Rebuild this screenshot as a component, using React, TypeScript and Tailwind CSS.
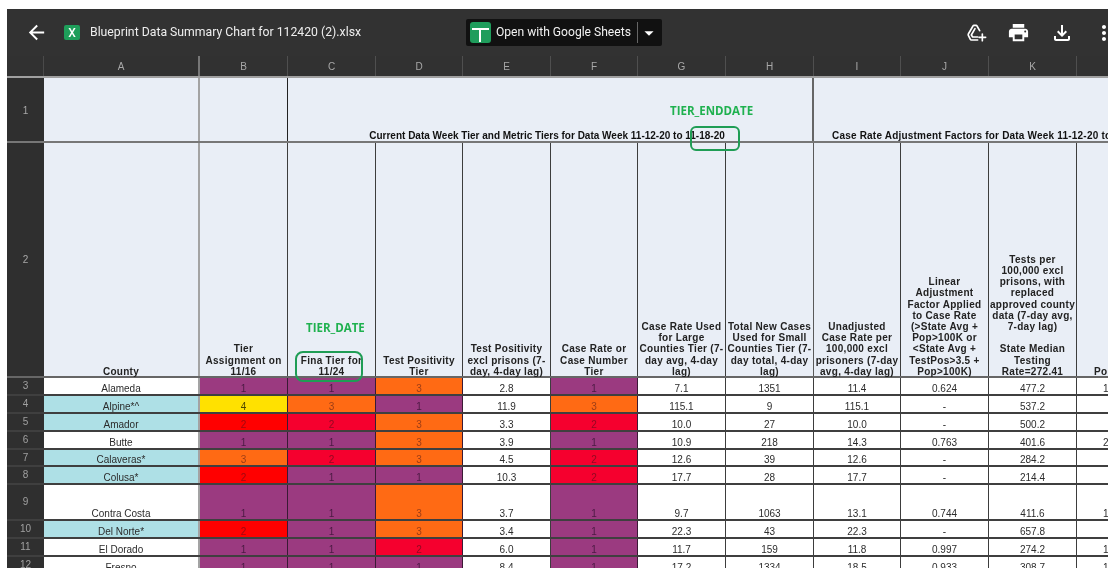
import React from "react";
import { MdArrowBack, MdPrint, MdOutlineFileDownload, MdMoreVert, MdArrowDropDown } from "react-icons/md";

const P = "bg-[#9b3a80]";
const O = "bg-[#ff6a14]";
const R = "bg-[#ff0000]";
const C = "bg-[#f5002e]";
const Y = "bg-[#ffe100]";
const tierText: Record<string, string> = {
  [P]: "text-[#4a1a42]",
  [O]: "text-[#9c3d16]",
  [R]: "text-[#a0080e]",
  [C]: "text-[#930822]",
  [Y]: "text-[#4f4800]",
};

type Row = {
  n: number; county: string; blue: boolean; h: string;
  b: [string, number]; c: [string, number]; d: [string, number]; e: string; f: [string, number];
  g: string; hh: string; i: string; j: string; k: string; l: string;
};

const rows: Row[] = [
  { n: 3, county: "Alameda", blue: false, h: "h-[18px]", b: [P, 1], c: [P, 1], d: [O, 3], e: "2.8", f: [P, 1], g: "7.1", hh: "1351", i: "11.4", j: "0.624", k: "477.2", l: "1" },
  { n: 4, county: "Alpine*^", blue: true, h: "h-[18px]", b: [Y, 4], c: [O, 3], d: [P, 1], e: "11.9", f: [O, 3], g: "115.1", hh: "9", i: "115.1", j: "-", k: "537.2", l: "" },
  { n: 5, county: "Amador", blue: true, h: "h-[18px]", b: [R, 2], c: [C, 2], d: [O, 3], e: "3.3", f: [C, 2], g: "10.0", hh: "27", i: "10.0", j: "-", k: "500.2", l: "" },
  { n: 6, county: "Butte", blue: false, h: "h-[18px]", b: [P, 1], c: [P, 1], d: [O, 3], e: "3.9", f: [P, 1], g: "10.9", hh: "218", i: "14.3", j: "0.763", k: "401.6", l: "2" },
  { n: 7, county: "Calaveras*", blue: true, h: "h-[17px]", b: [O, 3], c: [C, 2], d: [O, 3], e: "4.5", f: [C, 2], g: "12.6", hh: "39", i: "12.6", j: "-", k: "284.2", l: "" },
  { n: 8, county: "Colusa*", blue: true, h: "h-[18px]", b: [R, 2], c: [P, 1], d: [P, 1], e: "10.3", f: [C, 2], g: "17.7", hh: "28", i: "17.7", j: "-", k: "214.4", l: "" },
  { n: 9, county: "Contra Costa", blue: false, h: "h-[36px]", b: [P, 1], c: [P, 1], d: [O, 3], e: "3.7", f: [P, 1], g: "9.7", hh: "1063", i: "13.1", j: "0.744", k: "411.6", l: "1" },
  { n: 10, county: "Del Norte*", blue: true, h: "h-[18px]", b: [R, 2], c: [P, 1], d: [O, 3], e: "3.4", f: [P, 1], g: "22.3", hh: "43", i: "22.3", j: "-", k: "657.8", l: "" },
  { n: 11, county: "El Dorado", blue: false, h: "h-[18px]", b: [P, 1], c: [P, 1], d: [C, 2], e: "6.0", f: [P, 1], g: "11.7", hh: "159", i: "11.8", j: "0.997", k: "274.2", l: "1" },
  { n: 12, county: "Fresno", blue: false, h: "h-[18px]", b: [P, 1], c: [P, 1], d: [P, 1], e: "8.4", f: [P, 1], g: "17.2", hh: "1334", i: "18.5", j: "0.933", k: "308.7", l: "1" },
];

const cols = "grid grid-cols-[37px_156px_88px_88px_87px_88px_87px_88px_88px_87px_88px_88px_88px]";
const letters = ["A", "B", "C", "D", "E", "F", "G", "H", "I", "J", "K", "L"];
const thick = "border-r-2 border-r-[#a3a3a3]";
const thin = "border-r border-r-[#3d3d3d]";

const heads: { t: string; cls?: string }[] = [
  { t: "County", cls: thick },
  { t: "Tier\nAssignment on\n11/16", cls: thin },
  { t: "Fina Tier for\n11/24", cls: thin },
  { t: "Test Positivity\nTier", cls: thin },
  { t: "Test Positivity\nexcl prisons (7-\nday, 4-day lag)", cls: thin },
  { t: "Case Rate or\nCase Number\nTier", cls: thin },
  { t: "Case Rate Used\nfor Large\nCounties Tier (7-\nday avg, 4-day\nlag)", cls: thin },
  { t: "Total New Cases\nUsed for Small\nCounties Tier (7-\nday total, 4-day\nlag)", cls: "border-r border-r-[#5a5a5a]" },
  { t: "Unadjusted\nCase Rate per\n100,000 excl\nprisoners (7-day\navg, 4-day lag)", cls: thin },
  { t: "Linear\nAdjustment\nFactor Applied\nto Case Rate\n(>State Avg +\nPop>100K or\n<State Avg +\nTestPos>3.5 +\nPop>100K)", cls: thin },
  { t: "Tests per\n100,000 excl\nprisons, with\nreplaced\napproved county\ndata (7-day avg,\n7-day lag)\n\nState Median\nTesting\nRate=272.41", cls: thin },
  { t: "Population", cls: thin },
];

function Tier({ v }: { v: [string, number] }) {
  return (
    <div className={`${v[0]} ${tierText[v[0]]} flex items-end justify-center border-r border-r-[#3a1a35]`}>{v[1]}</div>
  );
}

function Val({ t }: { t: string }) {
  return <div className="flex items-end justify-center border-r border-r-[#3d3d3d] bg-white text-[#2c2c2c]">{t}</div>;
}

function AddToDrive() {
  return (
    <svg viewBox="0 0 60 54" className="ml-[305px] h-[18px] w-[20px] shrink-0" fill="none" stroke="white" strokeLinecap="round" strokeLinejoin="round">
      <path strokeWidth="5" d="M38 20 L30 6 Q29 4 27 4 H21 Q19 4 18 6 L4 30 Q3 32 4 34 L10 46 Q11 48 13 48 H32" />
      <path strokeWidth="5" d="M24 14 L13 33 L17 39 H32" />
      <path strokeWidth="5" d="M46 30 V50 M36 40 H56" />
    </svg>
  );
}

export default function App() {
  return (
    <div className="h-[573px] w-[1118px] overflow-hidden bg-white font-['Liberation_Sans',sans-serif]">
      <div className="relative ml-[7px] mt-[9px] h-[559px] w-[1101px] overflow-hidden bg-[#323232] blur-[0.4px]">
        {/* Top bar */}
        <div className="flex h-[47px] items-center bg-[#323232] text-white">
          <MdArrowBack className="ml-[18px] shrink-0 text-[23px]" />
          <div className="ml-[16px] flex h-[15px] w-[16px] shrink-0 items-center justify-center rounded-[2px] bg-[#1e9e5a] font-['Roboto',sans-serif] text-[12px] font-medium leading-none">X</div>
          <div className="ml-[10px] w-[376px] shrink-0 font-['Roboto',sans-serif] text-[12.25px] text-[#eeeeee]">Blueprint Data Summary Chart for 112420 (2).xlsx</div>
          <div className="flex h-[27px] w-[196px] shrink-0 items-center rounded-[2px] bg-[#111111] pl-[4px]">
            <div className="relative h-[21px] w-[21px] shrink-0 rounded-[3px] bg-[#1f9d5c]">
              <div className="absolute left-[2px] top-[6px] h-[2px] w-[17px] bg-white" />
              <div className="absolute left-[9px] top-[6px] h-[14px] w-[2px] bg-white" />
            </div>
            <span className="ml-[5px] whitespace-nowrap font-['Roboto',sans-serif] text-[12.1px] text-[#f2f2f2]">Open with Google Sheets</span>
            <div className="ml-[6px] h-[21px] w-px shrink-0 bg-[#666666]" />
            <MdArrowDropDown className="shrink-0 text-[22px]" />
          </div>
          <AddToDrive />
          <MdPrint className="ml-[20px] shrink-0 text-[23px]" />
          <MdOutlineFileDownload className="ml-[20px] shrink-0 text-[24px]" />
          <MdMoreVert className="ml-[18px] shrink-0 text-[24px]" />
        </div>

        {/* Table */}
        <div className="relative shadow-[inset_0_2px_2px_rgba(0,0,0,0.35)]">
          <div className={`${cols} h-[22px] border-b-2 border-b-[#a0a0a0] bg-[#313131] text-[10px] text-[#a8a8a8] font-['Liberation_Sans',sans-serif]`}>
            <div className="border-r border-r-[#4a4a4a]" />
            {letters.map((l, i) => (
              <div key={l} className={`flex items-center justify-center border-r ${i === 0 ? "border-r-2 border-r-[#777777]" : "border-r-[#4f4f4f]"}`}>{l}</div>
            ))}
          </div>

          {/* Row 1 */}
          <div className={`${cols} h-[65px] border-b-2 border-b-[#777777] text-[10px] font-bold leading-[10px] text-[#111111]`}>
            <div className="flex items-center justify-center bg-[#2f2f2f] pt-[2px] text-[10px] font-normal text-[#a8a8a8]">1</div>
            <div className={`bg-[#e9eef6] ${thick}`} />
            <div className="border-r border-r-[#222222] bg-[#e9eef6]" />
            <div className="col-span-6 flex items-end justify-center whitespace-nowrap border-r-2 border-r-[#666666] bg-[#e9eef6] pr-[6px]">
              Current Data Week Tier and Metric Tiers for Data Week 11-12-20 to 11-18-20
            </div>
            <div className="col-span-4 flex items-end overflow-hidden whitespace-nowrap bg-[#e9eef6] pl-[18px] tracking-[0.2px]">
              Case Rate Adjustment Factors for Data Week 11-12-20 to 11-18-20
            </div>
          </div>

          {/* Row 2 */}
          <div className={`${cols} h-[235px] border-b-2 border-b-[#666666] text-[10px] font-bold leading-[11.2px] tracking-[0.3px] text-[#222222]`}>
            <div className="flex items-center justify-center bg-[#2f2f2f] text-[10px] font-normal tracking-normal text-[#a8a8a8]">2</div>
            {heads.map((h, i) => (
              <div key={i} className={`flex items-end whitespace-pre-line bg-[#e9eef6] text-center ${h.cls} ${i === 11 ? "justify-start pl-[17px]" : "justify-center"}`}>
                <span className="-mb-px">{h.t}</span>
              </div>
            ))}
          </div>

          {/* Data */}
          {rows.map((r) => (
            <div key={r.n} className={`${cols} ${r.h} border-b-2 border-b-[#3f3f3f] text-[10px] leading-[10px]`}>
              <div className="flex items-center justify-center bg-[#2f2f2f] text-[#a0a0a0]">{r.n}</div>
              <div className={`flex items-end justify-center text-[#2c2c2c] ${thick} ${r.blue ? "bg-[#aee0e6]" : "bg-white"}`}>{r.county}</div>
              <Tier v={r.b} />
              <Tier v={r.c} />
              <Tier v={r.d} />
              <Val t={r.e} />
              <Tier v={r.f} />
              <Val t={r.g} />
              <Val t={r.hh} />
              <Val t={r.i} />
              <Val t={r.j} />
              <Val t={r.k} />
              <div className="flex items-end bg-white pl-[26px] text-[#2c2c2c]">{r.l}</div>
            </div>
          ))}
        </div>

        {/* Annotations over the sheet */}
        <div className="absolute left-[663px] top-[93px] font-['Open_Sans',sans-serif] text-[11.5px] font-bold text-[#1fb14f]">TIER_ENDDATE</div>
        <div className="absolute left-[299px] top-[310px] font-['Open_Sans',sans-serif] text-[11.5px] font-bold text-[#1fb14f]">TIER_DATE</div>
        <div className="absolute left-[683px] top-[117px] h-[25px] w-[50px] rounded-[6px] border-2 border-[#1f9d55]" />
        <div className="absolute left-[288px] top-[342px] h-[31px] w-[68px] rounded-[8px] border-2 border-[#1f9d55]" />
      </div>
    </div>
  );
}
